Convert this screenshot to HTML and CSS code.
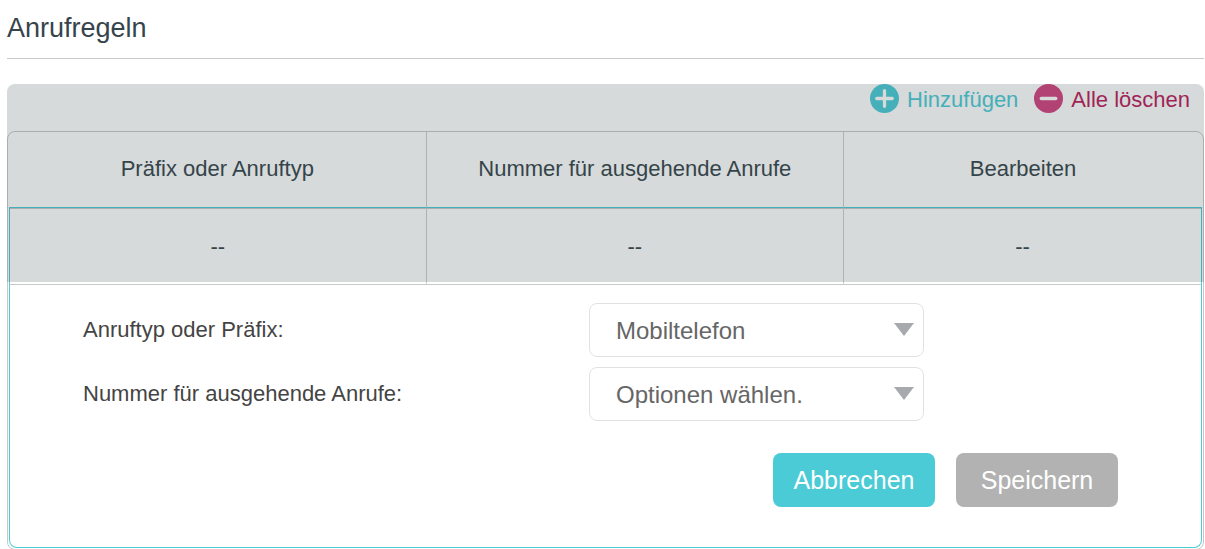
FILE: index.html
```
<!DOCTYPE html>
<html lang="de">
<head>
    <meta charset="UTF-8">
    <meta name="viewport" content="width=device-width, initial-scale=1.0">
    <title>Anrufregeln</title>
    <link rel="stylesheet" href="styles.css">
</head>
<body>
    <h2>Anrufregeln</h2>
    <div class="panel">
        <div class="toolbar">
            <button type="button" class="tool add">
                <svg class="icon" viewBox="0 0 30 30" aria-hidden="true">
                    <circle cx="15" cy="15" r="15" fill="currentColor"/>
                    <path d="M15 7v16M7 15h16" stroke="#fff" stroke-width="3.4" stroke-linecap="round"/>
                </svg>
                <span>Hinzufügen</span>
            </button>
            <button type="button" class="tool delete">
                <svg class="icon" viewBox="0 0 30 30" aria-hidden="true">
                    <circle cx="15" cy="15" r="15"/>
                    <path d="M7.5 15h15" stroke="#fff" stroke-width="3.4" stroke-linecap="round"/>
                </svg>
                <span>Alle löschen</span>
            </button>
        </div>

        <div class="grid-frame">
            <table>
                <thead>
                    <tr>
                        <th>Präfix oder Anruftyp</th>
                        <th>Nummer für ausgehende Anrufe</th>
                        <th>Bearbeiten</th>
                    </tr>
                </thead>
                <tbody>
                    <tr>
                        <td>--</td>
                        <td>--</td>
                        <td>--</td>
                    </tr>
                </tbody>
            </table>

            <form class="editor">
                <div class="field">
                    <label for="callType">Anruftyp oder Präfix:</label>
                    <div class="select-box">
                        <select id="callType" name="callType">
                            <option>Mobiltelefon</option>
                        </select>
                    </div>
                </div>
                <div class="field">
                    <label for="outNumber">Nummer für ausgehende Anrufe:</label>
                    <div class="select-box">
                        <select id="outNumber" name="outNumber">
                            <option>Optionen wählen.</option>
                        </select>
                    </div>
                </div>
                <div class="actions">
                    <button type="button" class="btn">Abbrechen</button>
                    <button type="submit" class="btn save">Speichern</button>
                </div>
            </form>
        </div>

        <!-- dims the toolbar and list while the editor is open -->
        <div class="mask"></div>
    </div>
</body>
</html>
```
FILE: styles.css
```
* {
    box-sizing: border-box;
}
html {
    overflow-y: hidden;
}
body {
    margin: 0;
    padding: 0 1px 0 7px;
    font-family: Arial, "Liberation Sans", sans-serif;
    font-size: 22px;
    color: #36444b;
    background-color: #fff;
}
h2 {
    margin: 0 0 25px;
    padding: 11px 0 12px;
    font-size: 27px;
    font-weight: normal;
    line-height: 35px;
    border-bottom: 1px solid #c8c8c8;
}
button, select {
    font-family: inherit;
    cursor: pointer;
}
.panel {
    position: relative;
}
.toolbar {
    display: flex;
    justify-content: flex-end;
    gap: 16px;
    height: 47px;
    padding-right: 14px;
}
.tool {
    display: flex;
    align-items: center;
    gap: 8px;
    height: 32px;
    padding: 0;
    border: none;
    background: none;
    font-size: 22px;
}
.add {
    color: #4acbd6;
}
.delete {
    color: #bc1a5c;
}
.delete .icon {
    fill: #d44180;
}
.icon {
    width: 29px;
    height: 29px;
    margin-bottom: 3px;
}
.grid-frame {
    padding: 0 1px 1px;
    border: 1px solid #c8c8c8;
    border-radius: 8px;
}
table {
    width: 100%;
    table-layout: fixed;
    border-collapse: separate;
    border-spacing: 0;
}
th, td {
    padding: 0;
    font-weight: normal;
    text-align: center;
    border-right: 1px solid #d0cece;
}
th {
    width: 35%;
    height: 75px;
    padding-bottom: 2px;
}
th:last-child {
    width: 30%;
    border-right: none;
}
td {
    height: 78px;
    padding-top: 2px;
    border-top: 1px solid #4acbd6;
    border-bottom: 1px solid #c8c8c8;
    box-shadow: inset 0 1px #c8c8c8;
}
td:first-child {
    border-left: 1px solid #4acbd6;
}
td:last-child {
    border-right-color: #4acbd6;
}
.editor {
    padding: 18px 83px 40px 73px;
    border: 1px solid #4acbd6;
    border-top: none;
    border-radius: 0 0 8px 8px;
}
.field {
    display: flex;
    margin-bottom: 10px;
}
.field label {
    width: 506px;
    line-height: 54px;
    color: #444;
}
.select-box {
    position: relative;
    width: 335px;
}
.select-box::after {
    content: "";
    position: absolute;
    top: 20px;
    right: 10px;
    width: 20px;
    height: 13px;
    background-color: #a7a9ac;
    clip-path: polygon(0 0, 100% 0, 50% 100%);
    pointer-events: none;
}
select {
    display: block;
    width: 100%;
    height: 54px;
    padding: 0 40px 0 26px;
    appearance: none;
    border: 1px solid #e2e2e2;
    border-radius: 8px;
    background-color: #fff;
    font-size: 24px;
    color: #666;
}
.actions {
    display: flex;
    justify-content: flex-end;
    gap: 21px;
    margin-top: 32px;
}
.btn {
    width: 162px;
    height: 54px;
    padding: 0;
    border: none;
    border-radius: 8px;
    background-color: #4acbd6;
    font-size: 25px;
    color: #fff;
}
.save {
    background-color: #b2b2b2;
}
.mask {
    position: absolute;
    top: 0;
    left: 0;
    width: 100%;
    height: 198px;
    border-radius: 8px 8px 0 0;
    background-color: rgba(50, 70, 70, 0.2);
}
```
